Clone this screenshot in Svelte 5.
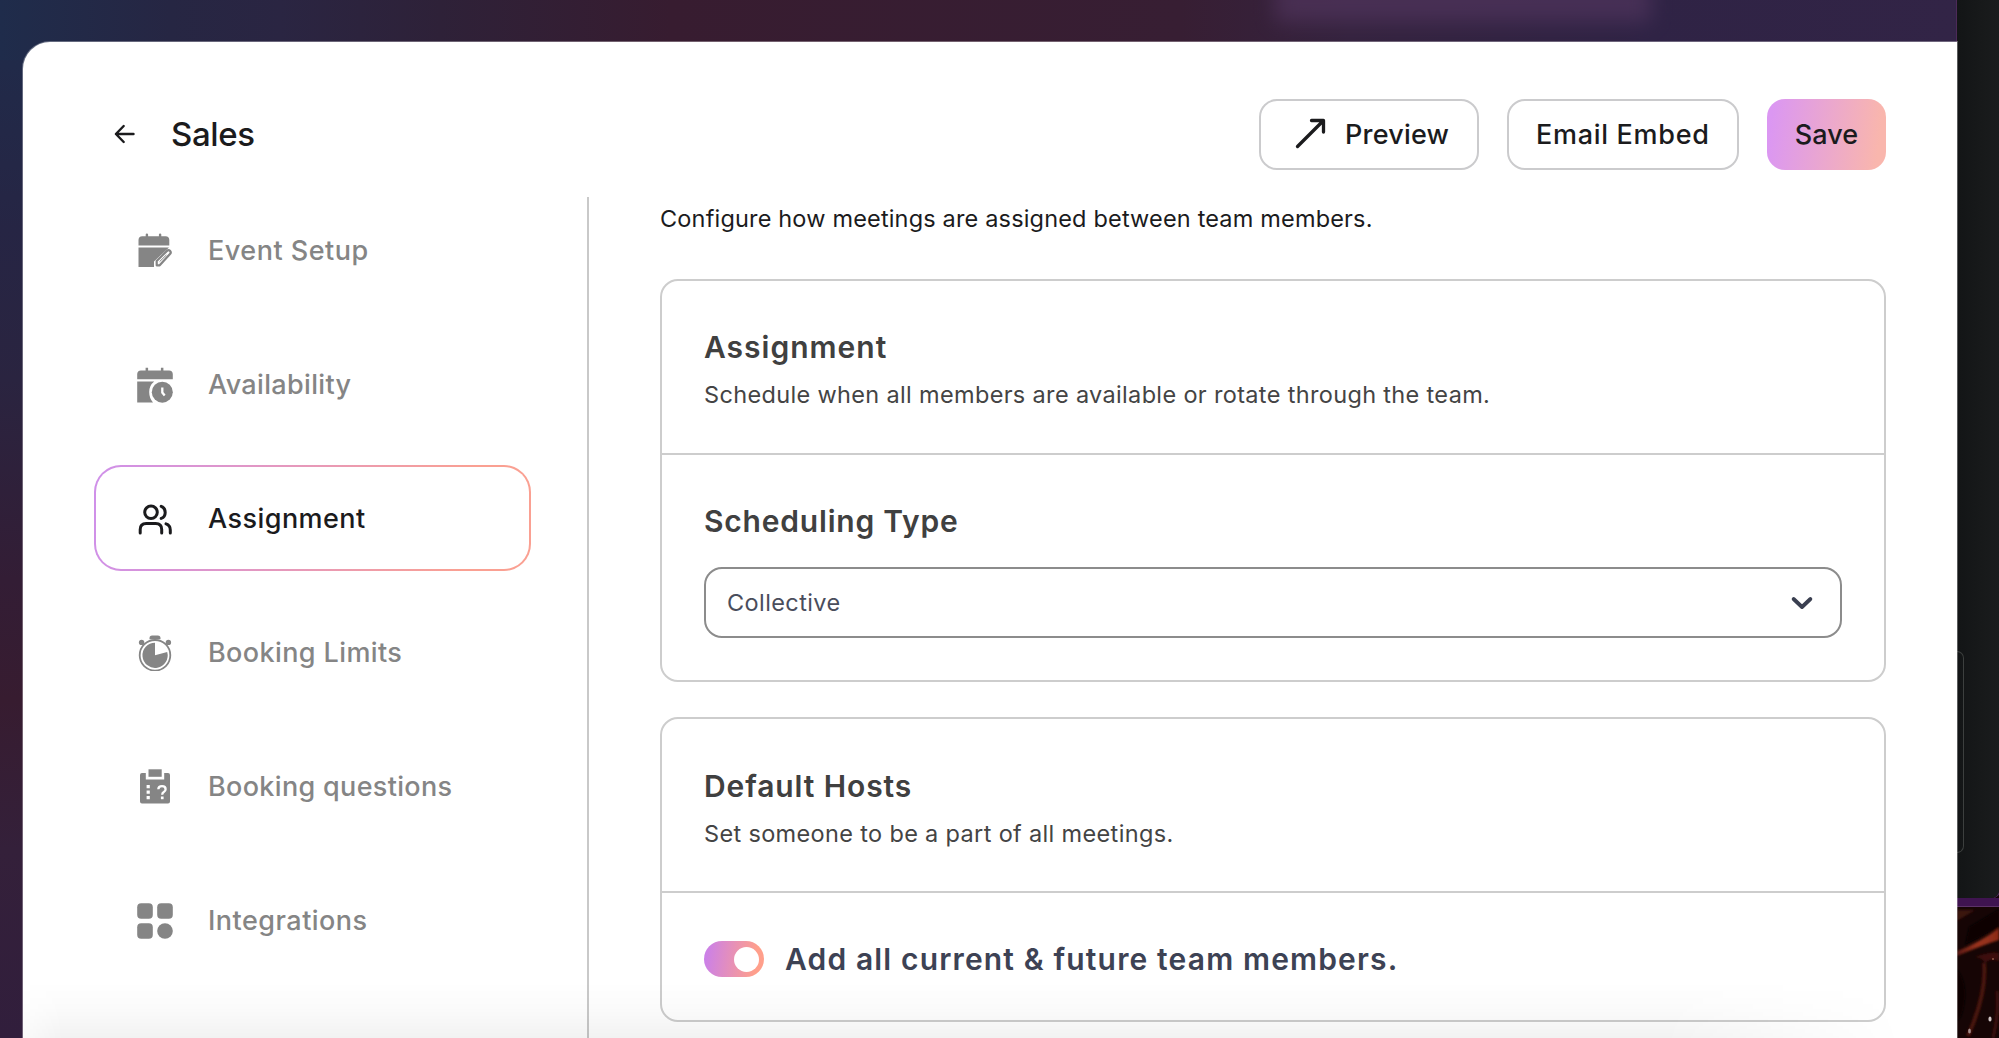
<script>
  const items = [
    { id: 'setup', label: 'Event Setup', tracking: 0.5 },
    { id: 'availability', label: 'Availability', tracking: 0.35 },
    { id: 'assignment', label: 'Assignment', tracking: 0.45 },
    { id: 'limits', label: 'Booking Limits', tracking: 0.39 },
    { id: 'questions', label: 'Booking questions', tracking: 0.33 },
    { id: 'integrations', label: 'Integrations', tracking: 0.48 }
  ];
  let active = $state('assignment');
  let addAll = $state(true);
</script>

<div class="desktop">
  <div class="glow"></div>
  <div class="backdrop">
    <section class="modal">
      <header>
        <button class="back" aria-label="Back">
          <svg width="22" height="22" viewBox="0 0 22 22" fill="none" stroke="#1b1b1d" stroke-width="2.4" stroke-linecap="round" stroke-linejoin="round">
            <path d="M19.500 11H2M9.700 3L1.900 11l7.800 8" />
          </svg>
        </button>
        <h1>Sales</h1>
        <div class="actions">
          <button class="btn preview">
            <svg width="32" height="32" viewBox="0 0 32 32" fill="none" stroke="#1b1b1d" stroke-width="3.300" stroke-linecap="round" stroke-linejoin="round">
              <path d="M2.500 28.500L28 3M16.500 2.500h12v11.500" />
            </svg>
            <span>Preview</span>
          </button>
          <button class="btn embed">Email Embed</button>
          <button class="btn save">Save</button>
        </div>
      </header>

      <div class="body">
        <nav>
          {#each items as item}
            <button class="item" class:active={active === item.id} onclick={() => (active = item.id)}>
              <svg class="icon" width="36" height="36" viewBox="0 0 36 36" fill="currentColor">
                {#if item.id === 'setup'}
                  <path d="M1.500 12.500V7q0-3.800 3.800-3.800h3.400V1.500q0-1 1.200-1t1.200 1v1.700h10.800V1.500q0-1 1.200-1t1.200 1v1.700h4.200q3.800 0 3.800 3.800v5.500z" />
                  <path d="M1.500 14.500h30.500L17 28.500v5.500H1.500z" />
                  <path d="M19.700 32.300v-4.300L30 17.900a2.100 2.100 0 0 1 3 3L22.700 32.300z" fill="none" stroke="currentColor" stroke-width="2.200" stroke-linejoin="round" />
                  <path d="M22.600 28.600l6.800-6.600" stroke="currentColor" stroke-width="1" />
                {:else if item.id === 'availability'}
                  <path d="M.2 12.300V7.200Q.2 3.400 4 3.400h4.600V.8h2.500v2.600h12.800V.8h2.500v2.600H32q3.800 0 3.800 3.800v5.100z" />
                  <path d="M.2 14.500h17Q12.200 18.400 12.200 25q0 6 3.800 10.500H.2z" />
                  <circle cx="25.300" cy="25.200" r="10.500" />
                  <path d="M25.300 20.500v5l2.400 3" fill="none" stroke="#fff" stroke-width="2.300" />
                {:else if item.id === 'assignment'}
                  <g fill="none" stroke="currentColor" stroke-width="3" stroke-linecap="round" stroke-linejoin="round">
                    <circle cx="14" cy="11.300" r="6.300" />
                    <path d="M3.200 32v-3.500q0-6 6-6h9.500q6 0 6 6V32M24.200 5.400q4 1.500 4 6t-4 6M29 22.900q4.300 1.400 4.300 6V32" />
                  </g>
                {:else if item.id === 'limits'}
                  <path d="M12.500 4.200V3q0-2.600 2.600-2.600h5.800q2.600 0 2.600 2.600v1.200z" />
                  <circle cx="4.600" cy="7.400" r="2.700" /><circle cx="31.400" cy="7.400" r="2.700" />
                  <circle cx="18" cy="20.300" r="15.300" fill="none" stroke="currentColor" stroke-width="1.800" />
                  <path d="M18 20.300V7.700A12.600 12.600 0 1 0 30.200 16.900z" />
                {:else if item.id === 'questions'}
                  <path d="M11.500.3h13.200v7.500H11.500z" />
                  <path d="M5 4h3.800v6.600h18.400V4H31q2 0 2 2v26.500q0 2-2 2H5q-2 0-2-2V6q0-2 2-2z" />
                  <path d="M9.600 16h3.200v3.200H9.600zM9.600 21.500h3.200v3.200H9.600zM9.600 27h3.200v3.200H9.600z" fill="#fff" />
                  <path d="M21.300 20.300q.2-3.100 3.700-3.100 3.600 0 3.600 3 0 1.700-1.800 2.800-1.600 1-1.600 2.700" fill="none" stroke="#fff" stroke-width="2.300" />
                  <path d="M23.900 27.500h2.700v2.700h-2.700z" fill="#fff" />
                {:else}
                  <rect x=".2" y=".2" width="15.600" height="15.600" rx="4" />
                  <rect x="20.200" y=".2" width="15.600" height="15.600" rx="4" />
                  <rect x=".2" y="20.200" width="15.600" height="15.600" rx="4" />
                  <circle cx="28" cy="28" r="7.800" />
                {/if}
              </svg>
              <span style:letter-spacing="{item.tracking}px">{item.label}</span>
            </button>
          {/each}
        </nav>

        <main>
          <p class="intro">Configure how meetings are assigned between team members.</p>

          <article class="card">
            <div class="head">
              <h2>Assignment</h2>
              <p>Schedule when all members are available or rotate through the team.</p>
            </div>
            <div class="content">
              <h2 class="field">Scheduling Type</h2>
              <button class="select">
                <span>Collective</span>
                <svg width="24" height="16" viewBox="0 0 24 16" fill="none" stroke="#3a3f50" stroke-width="3.800" stroke-linecap="round" stroke-linejoin="round">
                  <path d="M3.600 4l8.400 8 8.400-8" />
                </svg>
              </button>
            </div>
          </article>

          <article class="card">
            <div class="head">
              <h2 class="hosts">Default Hosts</h2>
              <p>Set someone to be a part of all meetings.</p>
            </div>
            <div class="content row">
              <button class="toggle" class:on={addAll} aria-label="Add all members" onclick={() => (addAll = !addAll)}>
                <i></i>
              </button>
              <span>Add all current &amp; future team members.</span>
            </div>
          </article>
        </main>
      </div>
      <div class="shade"></div>
    </section>
  </div>

  <aside>
    <div class="panel"><div class="outline"></div></div>
    <div class="edge"></div>
    <svg class="wallpaper" width="42" height="131" viewBox="0 0 42 131">
      <defs>
        <linearGradient id="ember" x1="0" y1="0" x2="1" y2="0">
          <stop offset="0" stop-color="#5a1a12" /><stop offset=".5" stop-color="#9a341d" /><stop offset="1" stop-color="#8c2b18" />
        </linearGradient>
        <filter id="soft"><feGaussianBlur stdDeviation="1.200" /></filter>
      </defs>
      <rect width="42" height="131" fill="#160505" />
      <g filter="url(#soft)">
        <path d="M0 3L18 3 0 14z" fill="#3b140d" />
        <path d="M12 20L42 2v18L8 38z" fill="#070202" />
        <path d="M0 44Q22 36 42 21v12Q26 38 0 49z" fill="url(#ember)" />
        <path d="M18 50Q34 44 42 46v8q-8-4-14 2-2-5-10-6z" fill="#3c100c" />
        <path d="M27 56Q30 86 11 129" fill="none" stroke="#4a140e" stroke-width="4" />
        <path d="M0 62Q14 80 4 110L0 114z" fill="#090202" />
        <path d="M40 84Q42 108 36 131" fill="none" stroke="#3c0f0b" stroke-width="3" />
      </g>
      <ellipse cx="33" cy="112" rx="1.600" ry="2.600" fill="#cfc4c4" />
      <ellipse cx="12.500" cy="124" rx="1.400" ry="2.600" fill="#a58e8c" />
      <circle cx="36" cy="52" r="1" fill="#94584a" />
    </svg>
  </aside>
</div>

<style>
  :global(body) { overflow: hidden; }
  .desktop, .desktop * { box-sizing: border-box; }
  .desktop {
    position: relative;
    display: flex;
    width: 1999px;
    height: 1038px;
    overflow: hidden;
    font-family: Inter, "Liberation Sans", sans-serif;
    color: #1b1b1d;
  }
  button {
    font: inherit;
    color: inherit;
    padding: 0;
    margin: 0;
    border: 0;
    background: none;
    text-align: left;
  }
  h1, h2, p { margin: 0; }
  svg { display: block; flex: none; }

  .backdrop {
    width: 1957px;
    padding: 42px 0 0 23px;
    background:
      linear-gradient(90deg, #1f2c4b 0, #262643 170px, #2a2542 280px, #2e2138 440px, #371c30 670px, #371e33 1180px, #35233f 1350px, #2f2345 1650px, #322446 1957px) 0 0 / 100% 60px no-repeat,
      linear-gradient(180deg, #1f2c4b 0, #262544 230px, #2a2440 380px, #331d35 580px, #371c30 700px, #34203a 850px, #311e3c 1038px);
  }
  .glow {
    position: absolute;
    left: 1275px;
    top: -20px;
    width: 376px;
    height: 42px;
    background: #53365f;
    opacity: .65;
    filter: blur(10px);
  }
  .modal {
    position: relative;
    height: 996px;
    border-top-left-radius: 27px;
    background: #fff;
    box-shadow: 0 0 0 1px rgba(255, 255, 255, .3);
  }

  header {
    display: flex;
    align-items: center;
    height: 155px;
    padding: 29px 71px 0 91px;
  }
  .back { margin-right: 35px; }
  h1 {
    font-size: 33px;
    font-weight: 450;
    letter-spacing: -.4px;
  }
  .actions {
    display: flex;
    gap: 28px;
    margin-left: auto;
  }
  .btn {
    display: flex;
    align-items: center;
    height: 71px;
    border: 2px solid #cbcbcd;
    border-radius: 18px;
    font-size: 27px;
    font-weight: 480;
  }
  .preview { width: 220px; padding-left: 34px; gap: 18px; letter-spacing: .2px; }
  .embed { width: 232px; padding-left: 27px; letter-spacing: .7px; }
  .save {
    width: 119px;
    border: 0;
    justify-content: center;
    letter-spacing: .1px;
    background: linear-gradient(97deg, #db97f2 5%, #f9b6ad 92%);
  }

  .body {
    display: flex;
    height: 841px;
  }
  nav {
    display: flex;
    flex-direction: column;
    gap: 28px;
    width: 566px;
    padding: 0 56px 0 71px;
    border-right: 2px solid #c9c9c9;
  }
  .item {
    display: flex;
    align-items: center;
    flex: none;
    gap: 35px;
    height: 106px;
    padding: 1px 0 0 41px;
    border: 2px solid transparent;
    border-radius: 27px;
    font-size: 27px;
    font-weight: 480;
    color: #858585;
  }
  .item.active {
    color: #1b1b1d;
    background:
      linear-gradient(#fff, #fff) padding-box,
      linear-gradient(98deg, #cf90ea, #faa092 85%) border-box;
  }

  main {
    flex: 1;
    padding: 1px 71px 0 71px;
  }
  .intro {
    font-size: 23.5px;
    line-height: 42px;
    letter-spacing: .17px;
    margin-bottom: 39px;
  }
  .card {
    border: 2px solid #cdcdcd;
    border-radius: 18px;
  }
  .card + .card { margin-top: 35px; }
  .head {
    padding: 42px 42px 35px;
    border-bottom: 2px solid #cdcdcd;
    color: #444;
  }
  .card + .card .head { padding: 43px 42px 34px; }
  h2 {
    font-size: 30px;
    line-height: 48px;
    font-weight: 580;
    letter-spacing: 1px;
    color: #404040;
  }
  h2.field { letter-spacing: .8px; }
  h2.hosts { letter-spacing: .9px; }
  .head p {
    margin-top: 1px;
    font-size: 23.5px;
    line-height: 46px;
    letter-spacing: .34px;
  }
  .content { padding: 42px 42px 42px; }
  .select {
    display: flex;
    align-items: center;
    justify-content: space-between;
    width: 100%;
    height: 71px;
    margin-top: 22px;
    padding: 0 26px 0 21px;
    border: 2px solid #8c8c8c;
    border-radius: 18px;
    font-size: 23.5px;
    letter-spacing: .4px;
    color: #4a4d5c;
  }
  .row {
    display: flex;
    align-items: center;
    gap: 21px;
    height: 127px;
    padding: 41px 42px 36px;
    font-size: 30px;
    font-weight: 580;
    letter-spacing: 1.150px;
    color: #3d4254;
  }
  .toggle {
    display: flex;
    align-items: center;
    width: 60px;
    height: 36px;
    padding: 0 5px;
    border-radius: 18px;
    background: #ccc;
  }
  .toggle.on {
    justify-content: flex-end;
    background: linear-gradient(97deg, #cb80e8 5%, #ff9f8b 85%);
  }
  .toggle i {
    width: 25px;
    height: 25px;
    border-radius: 50%;
    background: #fff;
  }
  .shade {
    position: absolute;
    inset: auto 0 0 0;
    height: 56px;
    pointer-events: none;
    background: linear-gradient(180deg, transparent, rgba(0, 0, 0, .014) 45%, rgba(0, 0, 0, .05));
    mask-image: linear-gradient(90deg, rgba(0, 0, 0, .4), #000 40px, #000 1640px, transparent 1880px);
  }

  aside {
    display: flex;
    flex-direction: column;
    width: 42px;
    background: #130404;
  }
  .panel {
    height: 898px;
    padding-top: 651px;
    background: linear-gradient(90deg, #131516, #1a1c1d);
    border-bottom-right-radius: 8px;
    box-shadow: 0 0 0 1px #4c2a58;
  }
  .outline {
    width: 7px;
    height: 202px;
    border: 1px solid #3c3f3e;
    border-left: 0;
    border-radius: 0 8px 8px 0;
  }
  .edge {
    height: 9px;
    background: #3f1450;
    border-bottom: 1px solid #5c3268;
  }
</style>
